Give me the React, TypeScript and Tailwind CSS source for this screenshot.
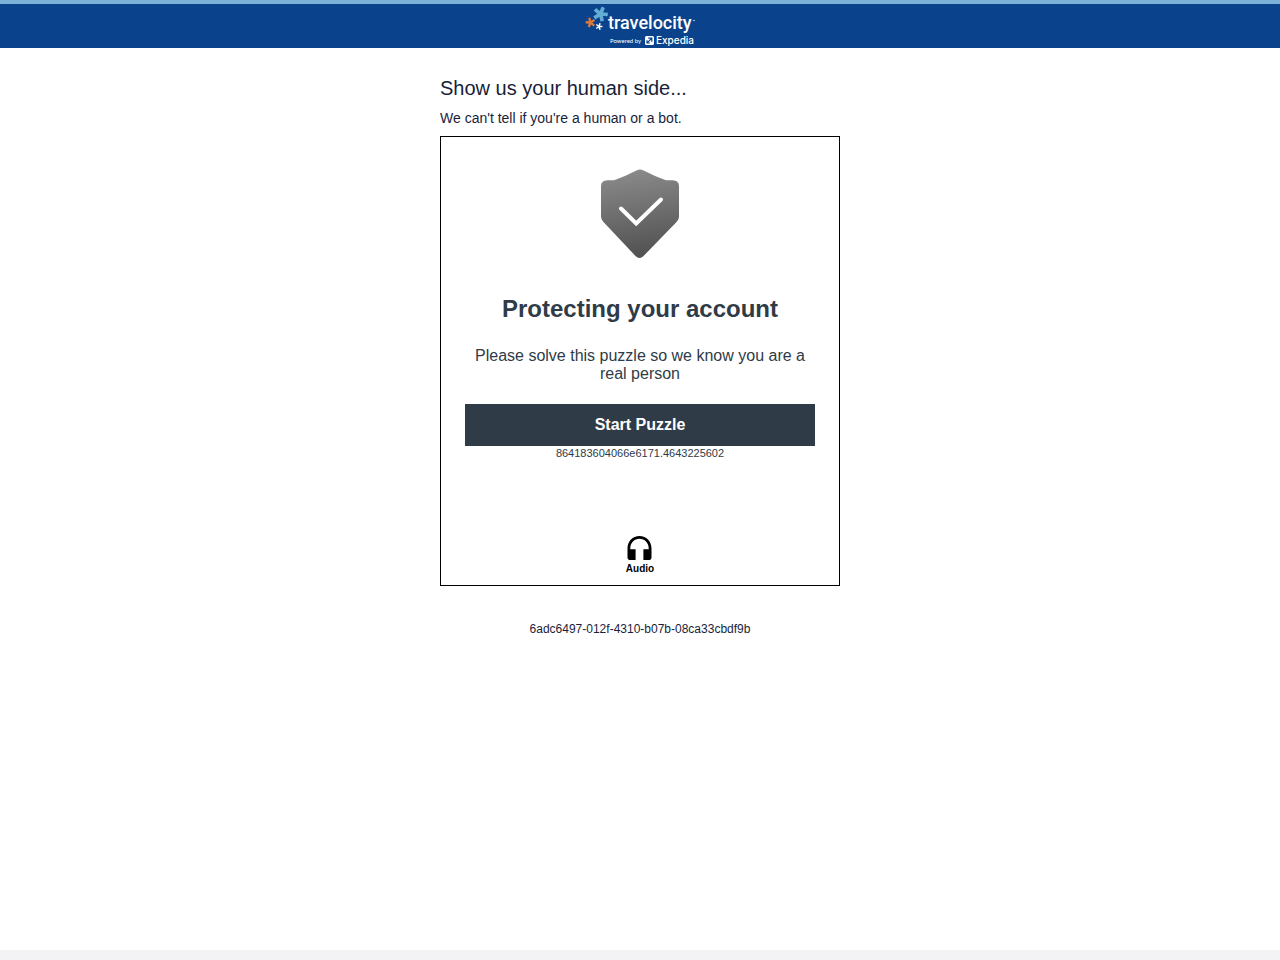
type StarProps = {
  cx: number;
  cy: number;
  r: number;
  rotate: number;
  width: number;
  color: string;
};

function Star({ cx, cy, r, rotate, width, color }: StarProps) {
  return (
    <g
      transform={`translate(${cx} ${cy}) rotate(${rotate})`}
      stroke={color}
      strokeWidth={width}
    >
      {[0, 72, 144, 216, 288].map((angle) => (
        <line key={angle} x1="0" y1="0" x2="0" y2={-r} transform={`rotate(${angle})`} />
      ))}
    </g>
  );
}

function Logo() {
  return (
    <svg width="112" height="44" viewBox="0 0 112 44" role="img" aria-label="Travelocity, powered by Expedia">
      <Star cx={16.5} cy={10} r={7.3} rotate={22} width={3.6} color="#64add6" />
      <Star cx={6.5} cy={18.5} r={4.8} rotate={-15} width={2.3} color="#dc7a3c" />
      <Star cx={15} cy={22.5} r={3.4} rotate={18} width={1.5} color="#ffffff" />
      <g fill="#ffffff">
        <text x="24" y="25" className="font-['Roboto',sans-serif] text-[18px] font-medium">
          travelocity
        </text>
        <circle cx="110" cy="16.5" r="0.7" />
        <text x="26" y="39" className="font-['Lato',sans-serif] text-[6px]">
          Powered by
        </text>
        <rect x="61" y="32" width="9" height="9" rx="1.5" />
        <text x="72" y="40" className="font-['Inter',sans-serif] text-[10px] font-medium">
          Expedia
        </text>
      </g>
      <path
        d="M64.2 34.2h3.6v3.6M67.4 34.6l-3.8 3.8M63 36.2v2.8h2.8"
        fill="none"
        stroke="#0a438b"
        strokeWidth="1.2"
      />
    </svg>
  );
}

function ShieldIcon() {
  return (
    <svg width="78" height="90" viewBox="0 0 78 90" aria-hidden="true">
      <defs>
        <linearGradient id="shield" x1="0.42" y1="0" x2="0.55" y2="1">
          <stop offset="0" stopColor="#8a8a8a" />
          <stop offset="1" stopColor="#505050" />
        </linearGradient>
      </defs>
      <path
        d="M36 1.2Q39 -0.4 42 1.2C50 5 57 8.4 65 11.2H71.5Q78 11.2 78 17.5V47.5Q78 50.5 75.8 52.8L42.5 87Q38.5 91 34.5 87L2.2 52.8Q0 50.5 0 47.5V17.5Q0 11.2 6.5 11.2H13C21 8.4 28 5 36 1.2Z"
        fill="url(#shield)"
      />
      <path
        d="M20 39.5L35.2 54.5L60 30.5"
        fill="none"
        stroke="#ffffff"
        strokeWidth="4"
        strokeLinecap="round"
      />
    </svg>
  );
}

function HeadphonesIcon() {
  return (
    <svg width="26" height="24" viewBox="0 0 26 24" fill="currentColor" aria-hidden="true">
      <path d="M12.5 0C5.7 0 .5 5.4 .5 12.2V21.2Q.5 24 3.3 24H8.6V13.2H3.3V12.2C3.3 7 7.3 2.8 12.5 2.8S21.7 7 21.7 12.2V13.2H16.4V24H21.7Q24.5 24 24.5 21.2V12.2C24.5 5.4 19.3 0 12.5 0Z" />
    </svg>
  );
}

function Challenge() {
  return (
    <section className="flex min-h-[450px] flex-col items-center border border-black px-6 pt-8 pb-2.5 text-center text-[#2f3b47]">
      <ShieldIcon />
      <h2 className="mt-9 text-2xl leading-7 font-bold">Protecting your account</h2>
      <p className="mt-6 text-base leading-[18px]">
        Please solve this puzzle so we know you are a real person
      </p>
      <button
        type="button"
        className="mt-[21px] h-[42px] w-full bg-[#2f3b47] text-base font-bold text-white"
      >
        Start Puzzle
      </button>
      <p className="text-[11px] leading-3.5">864183604066e6171.4643225602</p>
      <button
        type="button"
        className="mt-auto flex flex-col items-center gap-[3px] text-[10px] leading-3 font-bold text-black"
      >
        <HeadphonesIcon />
        Audio
      </button>
    </section>
  );
}

export default function App() {
  return (
    <div className="flex min-h-screen flex-col bg-[#f3f3f5] pb-2.5 font-['Liberation_Sans',Arial,sans-serif] text-[#191e3b]">
      <header className="flex h-12 justify-center border-t-4 border-[#7db1d8] bg-[#0a438b]">
        <Logo />
      </header>
      <main className="flex-1 bg-white px-4">
        <div className="mx-auto max-w-[400px] pt-7">
          <h1 className="text-xl leading-6">Show us your human side...</h1>
          <p className="mt-2 mb-2 text-sm leading-5">
            We can't tell if you're a human or a bot.
          </p>
          <Challenge />
          <p className="mt-9 text-center text-xs leading-3.5">
            6adc6497-012f-4310-b07b-08ca33cbdf9b
          </p>
        </div>
      </main>
    </div>
  );
}
